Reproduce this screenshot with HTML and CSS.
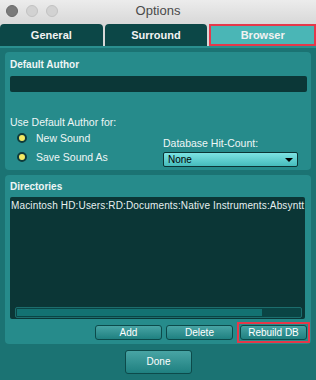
FILE: index.html
```html
<!DOCTYPE html>
<html>
<head>
<meta charset="utf-8">
<link rel="stylesheet" href="styles.css">
</head>
<body>
<div class="window">
  <div class="titlebar">
    <div class="lights">
      <span class="light dark"></span>
      <span class="light"></span>
      <span class="light"></span>
    </div>
    <div class="title">Options</div>
  </div>
  <div class="tabs">
    <div class="tab">General</div>
    <div class="tab">Surround</div>
    <div class="tab active">Browser</div>
  </div>
  <div class="body">
    <div class="panel author">
      <div class="label">Default Author</div>
      <div class="field"></div>
      <div class="cols">
        <div class="col-left">
          <div class="label">Use Default Author for:</div>
          <div class="radio"><span class="dot"></span>New Sound</div>
          <div class="radio"><span class="dot"></span>Save Sound As</div>
        </div>
        <div class="col-right">
          <div class="label">Database Hit-Count:</div>
          <div class="select"><span>None</span><span class="arrow"></span></div>
        </div>
      </div>
    </div>
    <div class="panel dirs">
      <div class="label">Directories</div>
      <div class="list">
        <div class="path">Macintosh HD:Users:RD:Documents:Native Instruments:Absyntt</div>
        <div class="scroll"><div class="thumb"></div></div>
      </div>
      <div class="buttons">
        <div class="btn">Add</div>
        <div class="btn">Delete</div>
        <div class="hl"><div class="btn">Rebuild DB</div></div>
      </div>
    </div>
    <div class="done-row"><div class="btn done">Done</div></div>
  </div>
</div>
</body>
</html>
```
FILE: styles.css
```css
* { box-sizing: border-box; }
html, body { margin: 0; padding: 0; }
body { width: 316px; height: 380px; overflow: hidden; background: #1b7373; font-family: "Liberation Sans", Arial, sans-serif; }
.window { width: 316px; height: 380px; display: flex; flex-direction: column; }
.titlebar { height: 24px; background: linear-gradient(#ececec, #d8d8d8); position: relative; display: flex; align-items: flex-start; justify-content: center; }
.lights { position: absolute; left: 6px; top: 5px; display: flex; gap: 8px; }
.light { width: 12px; height: 12px; border-radius: 50%; background: #d2d2d2; border: 1px solid #c2c2c2; }
.light.dark { background: #7a7a7a; border-color: #6a6a6a; }
.title { font-size: 13px; color: #4a4a4a; line-height: 22px; }
.tabs { height: 22px; display: flex; gap: 2px; background: #d8d8d8; }
.tab { flex: 1; background: #0c4747; color: #f2f2f2; font-weight: bold; font-size: 11px; text-align: center; line-height: 22px; border-radius: 4px 4px 0 0; }
.tab.active { background: #4ab6b6; border: 2px solid #e5384a; border-radius: 0; line-height: 18px; }
.body { flex: 1; background: #1b7373; border-top: 2px solid #2a8f8f; padding: 4px 5px 0 5px; display: flex; flex-direction: column; gap: 5px; }
.panel { background: #268b8b; border-radius: 4px; padding: 5px 5px 0 5px; }
.author { height: 118px; }
.label { color: #eef6f6; font-size: 10.5px; line-height: 12px; }
.author > .label { margin-top: 2px; font-weight: bold; font-size: 10px; }
.field { height: 16px; background: #0b3737; border-radius: 2px; margin-top: 5px; margin-right: -1px; }
.cols { display: flex; margin-top: 24px; }
.col-left { width: 153px; }
.col-right { flex: 1; padding-top: 21px; }
.radio { display: flex; align-items: center; color: #eef6f6; font-size: 10.5px; height: 19px; padding-left: 7px; }
.radio:first-of-type { margin-top: 4px; }
.dot { width: 10px; height: 10px; border-radius: 50%; background: #f2ea64; border: 2px solid #0e3b3b; margin-right: 9px; }
.select { margin-top: 3px; height: 15px; width: 135px; background: linear-gradient(#7de3e3, #45bcbc); border: 1px solid #0c3535; border-radius: 2px; display: flex; align-items: center; justify-content: space-between; padding: 0 4px; font-size: 10px; color: #000; }
.arrow { width: 0; height: 0; border-left: 4px solid transparent; border-right: 4px solid transparent; border-top: 4px solid #000; }
.dirs { height: 169px; padding-top: 6px; }
.dirs > .label { font-weight: bold; font-size: 10px; }
.list { margin-top: 4px; height: 122px; background: #0b3636; border-radius: 2px; padding: 3px 0 0 1px; display: flex; flex-direction: column; margin-right: 1px; }
.path { color: #e6f0f0; font-size: 10px; white-space: nowrap; overflow: hidden; line-height: 12px; letter-spacing: 0.15px; }
.scroll { margin-top: auto; margin-bottom: 1px; margin-left: 4px; margin-right: 3px; height: 11px; background: #0a4444; border: 1px solid #1c6d6d; border-radius: 2px; padding: 1px; }
.thumb { width: 245px; height: 100%; background: #137272; }
.buttons { display: flex; justify-content: flex-end; align-items: center; gap: 4px; margin-top: 3px; margin-right: -4px; }
.btn { width: 67px; height: 15px; background: linear-gradient(#48a4a4, #1f8080); border: 1px solid #0c4a4a; border-radius: 3px; color: #fff; font-size: 10px; text-align: center; line-height: 13px; }
.hl { border: 2px solid #e5384a; padding: 1px; }
.done-row { display: flex; justify-content: center; padding-top: 1px; }
.done { width: 67px; height: 24px; line-height: 22px; margin-left: 1px; }
```
